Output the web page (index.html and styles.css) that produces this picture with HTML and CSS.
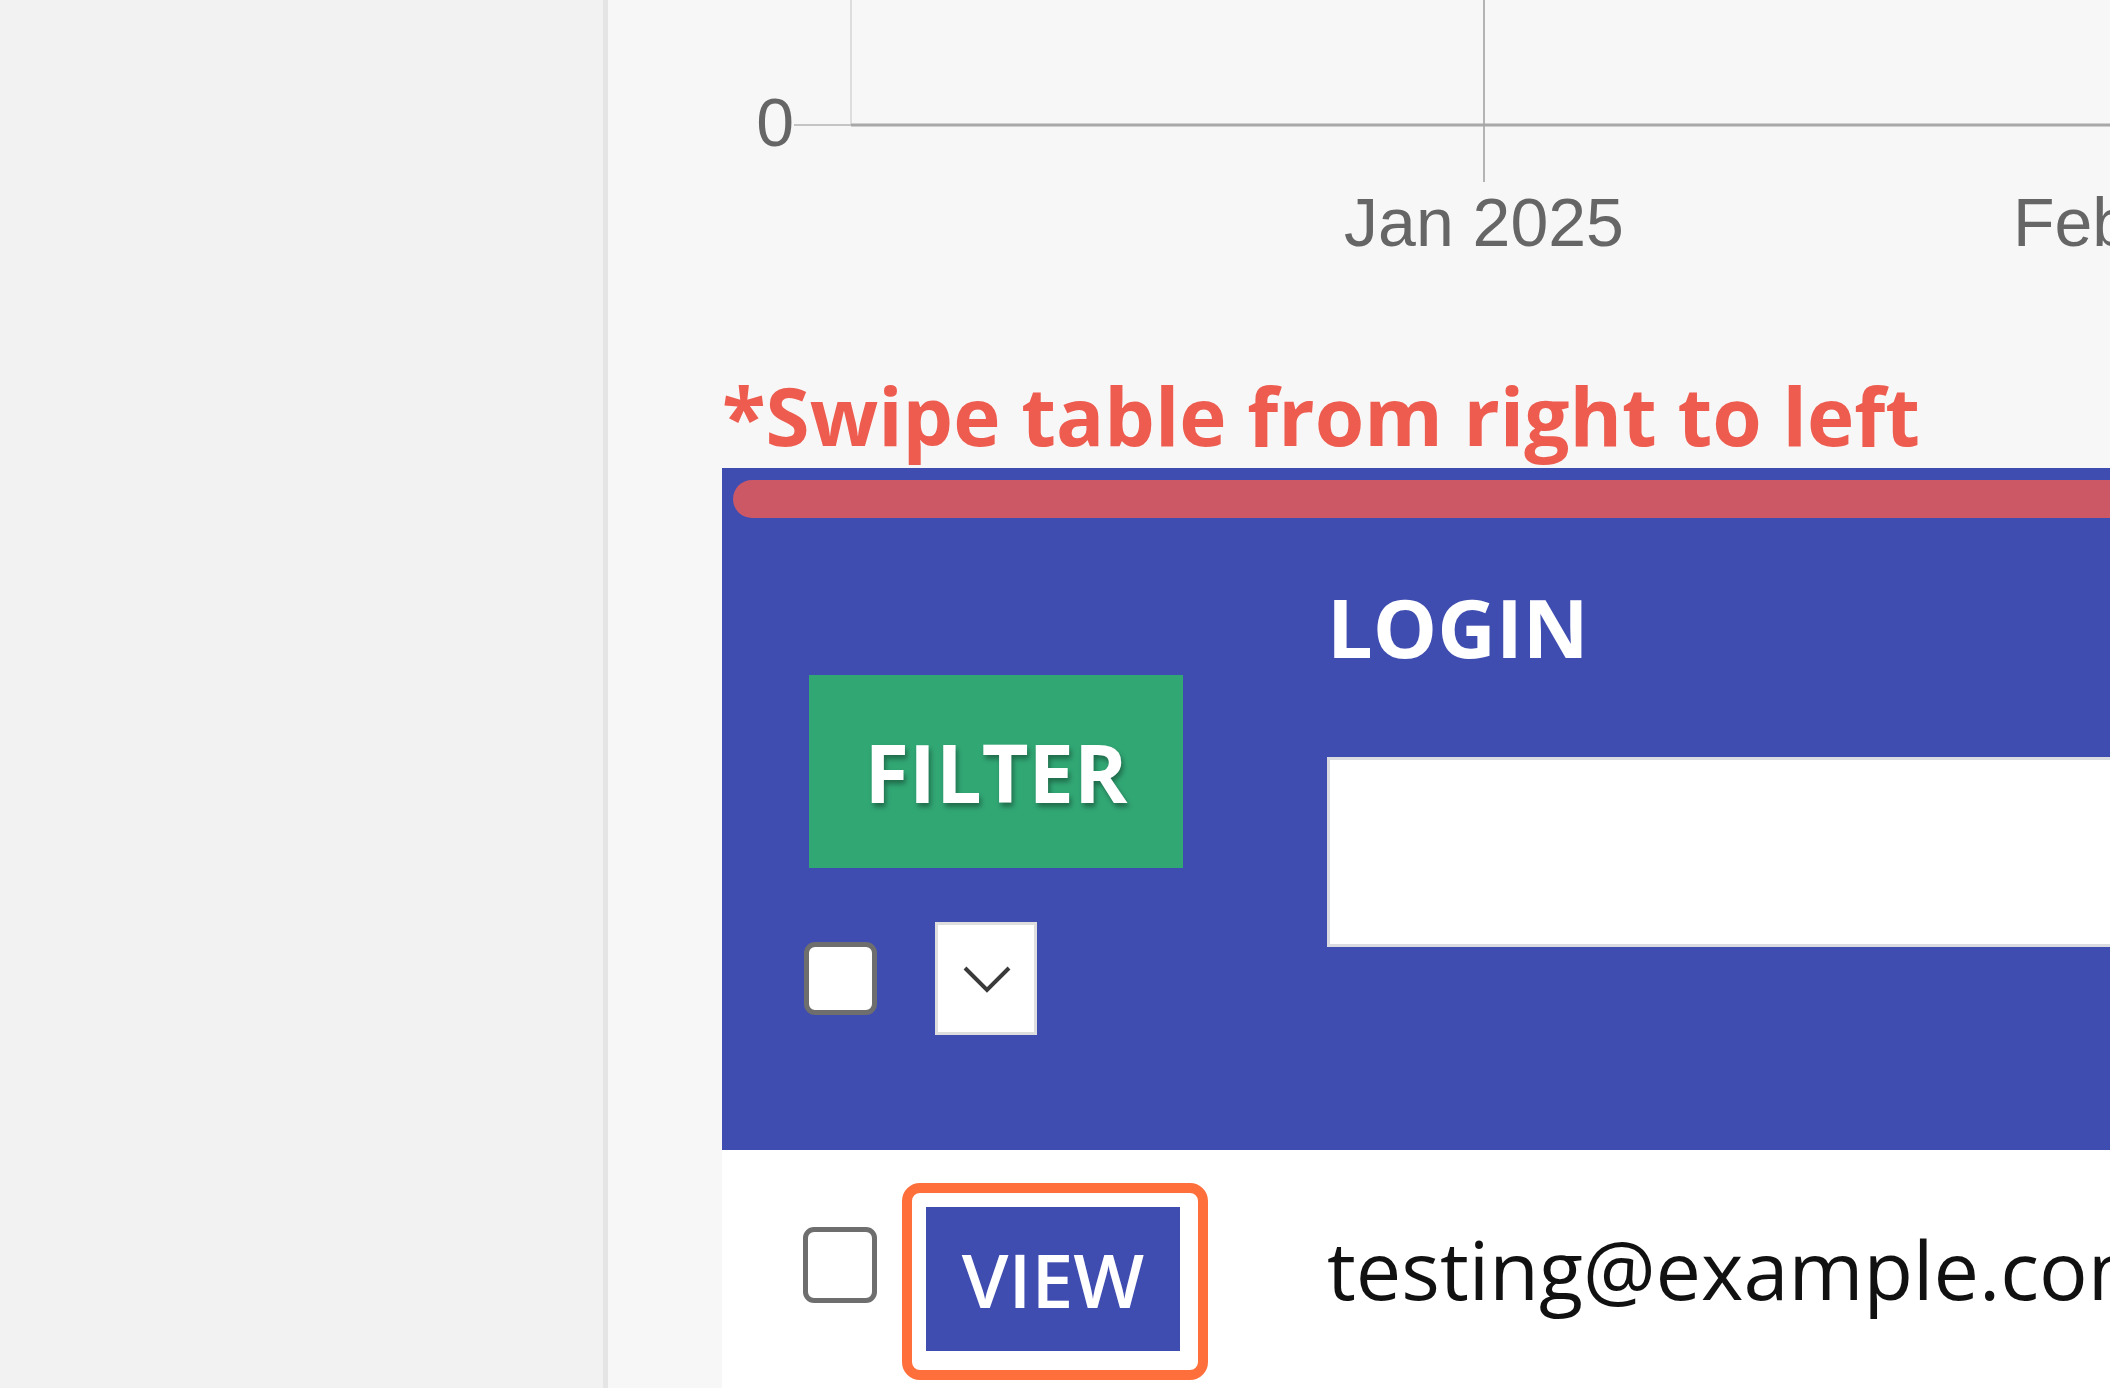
FILE: index.html
```html
<!DOCTYPE html>
<html lang="en">
<head>
    <meta charset="UTF-8">
    <meta name="viewport" content="width=device-width, initial-scale=1.0">
    <title>Users</title>
    <link rel="stylesheet" href="styles.css">
</head>
<body>
    <div class="layout">
        <aside class="sidebar"></aside>

        <main class="content">
            <div class="chart">
                <svg class="chart-svg" width="1502" height="362" viewBox="0 0 1502 362">
                    <line x1="243" y1="0" x2="243" y2="125" stroke="#dddddd" stroke-width="2"/>
                    <line x1="876" y1="0" x2="876" y2="182" stroke="#b4b4b4" stroke-width="2"/>
                    <line x1="186" y1="125" x2="243" y2="125" stroke="#c4c4c4" stroke-width="2"/>
                    <line x1="243" y1="125" x2="1502" y2="125" stroke="#a8a8a8" stroke-width="3"/>
                    <text class="tick" x="186" y="146" text-anchor="end">0</text>
                    <text class="tick" x="876" y="246" text-anchor="middle">Jan 2025</text>
                    <text class="tick" x="1405" y="246">Feb 2025</text>
                </svg>
            </div>

            <p class="swipe-note">*Swipe table from right to left</p>

            <div class="table-wrap">
                <div class="scrollbar"><div class="scrollbar-thumb"></div></div>

                <div class="grid-head">
                    <div class="cell cell-actions head-actions">
                        <button class="btn-filter">FILTER</button>
                        <div class="bulk">
                            <input type="checkbox" class="check">
                            <span class="select-toggle">
                                <svg width="50" height="30" viewBox="0 0 50 30">
                                    <polyline points="3,4 25,26 47,4" fill="none" stroke="#3a3a3a" stroke-width="4"/>
                                </svg>
                            </span>
                        </div>
                    </div>
                    <div class="cell cell-login head-login">
                        <label class="col-title">LOGIN</label>
                        <input type="text" class="col-input">
                    </div>
                </div>

                <div class="grid-row">
                    <div class="cell cell-actions row-actions">
                        <input type="checkbox" class="check check-row">
                        <span class="focus-ring"><button class="btn-view">VIEW</button></span>
                    </div>
                    <div class="cell cell-login row-login">testing@example.com</div>
                </div>
            </div>
        </main>
    </div>
</body>
</html>
```

FILE: styles.css
```css
body {
    margin: 0;
    height: 1388px;
    overflow: hidden;
    font-family: "Open Sans", "Liberation Sans", sans-serif;
}
.layout {
    display: flex;
    height: 1388px;
}
.sidebar {
    width: 603px;
    flex-shrink: 0;
    background-color: #f2f2f2;
    border-right: 5px solid #e5e5e5;
}
.content {
    flex: 1;
    min-width: 0;
    background-color: #f7f7f7;
    padding-left: 114px;
    overflow: hidden;
}

/* chart */
.chart {
    height: 362px;
    margin-left: -114px;
}
.chart-svg {
    display: block;
}
.tick {
    font-family: "Liberation Sans", Arial, sans-serif;
    font-size: 68px;
    fill: #666666;
}

.swipe-note {
    margin: 0;
    height: 106px;
    line-height: 106px;
    font-size: 80px;
    font-weight: 700;
    color: #ee5c4f;
    white-space: nowrap;
}

/* table */
.table-wrap {
    background-color: #3f4db1;
    width: 1600px;
}
.scrollbar {
    padding: 12px 0 0 11px;
}
.scrollbar-thumb {
    height: 38px;
    background-color: #cc5866;
    border-radius: 19px;
}
.grid-head, .grid-row {
    display: flex;
}
.grid-head {
    height: 632px;
}
.grid-row {
    background-color: white;
    height: 300px;
}
.cell-actions {
    width: 605px;
    flex-shrink: 0;
    box-sizing: border-box;
}
.cell-login {
    flex: 1;
}

.head-actions {
    padding: 157px 0 0 87px;
}
.btn-filter {
    display: flex;
    align-items: center;
    justify-content: center;
    width: 374px;
    height: 193px;
    padding: 0;
    border: none;
    background-color: #31a774;
    color: white;
    font-family: inherit;
    font-size: 81px;
    font-weight: 700;
    text-shadow: 2px 4px 5px rgba(0, 0, 0, 0.35);
}
.bulk {
    display: flex;
    align-items: center;
    gap: 58px;
    margin: 54px 0 0 -5px;
}
.check {
    appearance: none;
    margin: 0;
    width: 73px;
    height: 73px;
    box-sizing: border-box;
    border: 5px solid #6e6e6e;
    border-radius: 11px;
    background-color: white;
}
.select-toggle {
    display: flex;
    align-items: center;
    justify-content: center;
    width: 102px;
    height: 113px;
    box-sizing: border-box;
    border: 3px solid #dedede;
    background-color: white;
    padding-left: 2px;
}

.head-login {
    padding-top: 53px;
}
.col-title {
    display: block;
    color: white;
    font-size: 81px;
    font-weight: 700;
}
.col-input {
    display: block;
    margin: 75px 0 0;
    width: 100%;
    height: 190px;
    box-sizing: border-box;
    border: 3px solid #d9dbe0;
    background-color: white;
}

.row-actions {
    display: flex;
    align-items: flex-start;
    padding: 33px 0 0 81px;
}
.check-row {
    width: 74px;
    height: 76px;
    margin-top: 44px;
}
.focus-ring {
    display: block;
    margin-left: 25px;
    padding: 14px 18px 19px 14px;
    border: 10px solid #ff6f3c;
    border-radius: 18px;
}
.btn-view {
    display: block;
    width: 254px;
    height: 144px;
    padding: 0;
    border: none;
    background-color: #3f4db1;
    color: white;
    font-family: inherit;
    font-size: 75px;
    font-weight: 600;
}
.row-login {
    padding-top: 63px;
    font-size: 81px;
    line-height: normal;
    color: #111111;
    white-space: nowrap;
}
```
